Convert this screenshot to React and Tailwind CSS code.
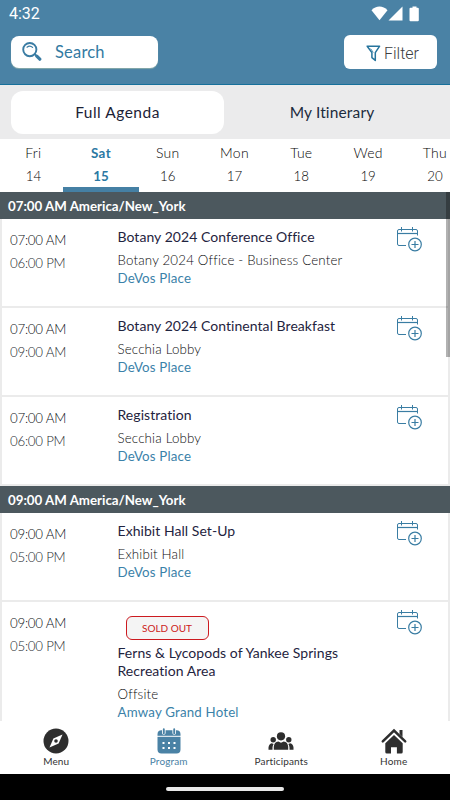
const days = [
  { name: "Fri", date: "14" },
  { name: "Sat", date: "15", active: true },
  { name: "Sun", date: "16" },
  { name: "Mon", date: "17" },
  { name: "Tue", date: "18" },
  { name: "Wed", date: "19" },
  { name: "Thu", date: "20" },
];

const sections = [
  {
    time: "07:00 AM America/New_York",
    items: [
      {
        start: "07:00 AM",
        end: "06:00 PM",
        title: "Botany 2024 Conference Office",
        room: "Botany 2024 Office - Business Center",
        place: "DeVos Place",
        height: "h-[89px]",
      },
      {
        start: "07:00 AM",
        end: "09:00 AM",
        title: "Botany 2024 Continental Breakfast",
        room: "Secchia Lobby",
        place: "DeVos Place",
        height: "h-[89px]",
      },
      {
        start: "07:00 AM",
        end: "06:00 PM",
        title: "Registration",
        room: "Secchia Lobby",
        place: "DeVos Place",
        height: "h-[89px]",
      },
    ],
  },
  {
    time: "09:00 AM America/New_York",
    items: [
      {
        start: "09:00 AM",
        end: "05:00 PM",
        title: "Exhibit Hall Set-Up",
        room: "Exhibit Hall",
        place: "DeVos Place",
        height: "h-[89px]",
      },
      {
        start: "09:00 AM",
        end: "05:00 PM",
        title: "Ferns & Lycopods of Yankee Springs Recreation Area",
        room: "Offsite",
        place: "Amway Grand Hotel",
        soldOut: true,
        height: "h-[123px]",
      },
    ],
  },
];

function SearchIcon() {
  return (
    <svg width="20" height="20" viewBox="0 0 20 20" fill="none" stroke="#3a7ca3" strokeLinecap="round">
      <circle cx="7.8" cy="7.6" r="6.6" strokeWidth="1.9" />
      <path d="M5 5.2a4.2 4.2 0 0 1 5.6.2" strokeWidth="1.2" />
      <path d="M13 12.4l1.6 1.5" strokeWidth="1.8" />
      <path d="M14.8 14.2l3 3" strokeWidth="3.2" />
    </svg>
  );
}

function FilterIcon() {
  return (
    <svg width="15" height="17" viewBox="0 0 15 17" fill="none" stroke="#26749d" strokeWidth="1.5" strokeLinejoin="round">
      <path d="M1.2 1.2h12.4L9.3 7.6v7.8L5.9 12.6V7.6z" />
      <path d="M4.6 3.6l2.7 3.9" strokeWidth="0.8" />
    </svg>
  );
}

function CalendarAdd() {
  return (
    <svg width="25" height="25" viewBox="0 0 25 25" fill="none" stroke="#3a7da3" strokeWidth="1">
      <path d="M9 18.500H2A1.500 1.500 0 0 1 .5 17V4A1.500 1.500 0 0 1 2 2.500h17A1.500 1.500 0 0 1 20.500 4v4.500" />
      <path d="M.5 6.500h20" strokeWidth="1.200" />
      <path d="M4.500 0v4.500M15.500 0v4.500" />
      <circle cx="18" cy="17.500" r="6.300" strokeWidth="1.200" />
      <path d="M14.500 17.500h7M18 14v7" strokeWidth="1.200" />
    </svg>
  );
}

function StatusBar() {
  return (
    <div className="flex h-7 items-center justify-between pr-[30px] pl-[9px]">
      <span className="font-[Roboto] text-[16px] leading-7 text-white">4:32</span>
      <svg width="49" height="16" viewBox="0 0 49 16" fill="#fff">
        <path d="M0.500 4.300C5-.7 12-.7 16.500 4.300L8.500 14.200z" />
        <path d="M31.500 0.500v14H17.500z" />
        <path d="M39.500 1.800h2V.5h4v1.300h1.300q1 0 1 1v11.400q0 1-1 1h-7.300q-1 0-1-1V2.800q0-1 1-1z" />
      </svg>
    </div>
  );
}

function AgendaItem({ item }) {
  return (
    <div className={`flex shrink-0 border-x-2 border-b-2 border-[#ebebeb] bg-white pl-2 ${item.height}`}>
      <div className="w-[107.5px] shrink-0 pt-[10px] text-[13.3px] font-light leading-[22.5px] tracking-[-0.25px] text-[#0c1015]">
        <p>{item.start}</p>
        <p className="text-[#262b30]">{item.end}</p>
      </div>
      <div className="w-[260.5px] shrink-0 pt-[9px] leading-[18px]">
        {item.soldOut && (
          <div className="mt-[5px] mb-1 ml-2 flex h-6 w-[83px] items-center justify-center rounded-md border border-[#cc1a20] bg-[#f4f4f4] text-[10px] text-[#cc1a20]">
            SOLD OUT
          </div>
        )}
        <p className="text-[14px] tracking-[0.05px] text-[#1f2440]">{item.title}</p>
        <p className="mt-[5px] text-[13.3px] font-light tracking-[0.18px] text-[#0c0c0e]">{item.room}</p>
        <p className="text-[13.3px] tracking-[0.18px] text-[#3b82a9]">{item.place}</p>
      </div>
      <div className="ml-[19px] pt-2">
        <CalendarAdd />
      </div>
    </div>
  );
}

function MenuIcon() {
  return (
    <svg width="26" height="26" viewBox="0 0 26 26">
      <circle cx="13" cy="13" r="12.500" fill="#2e2e2e" />
      <path d="M19.500 6.500L15.600 15.400 6.500 19.500 10.400 10.600z" fill="#fff" />
      <circle cx="13" cy="13" r="1.800" fill="#2e2e2e" />
    </svg>
  );
}

function ProgramIcon() {
  return (
    <svg width="26" height="26" viewBox="0 0 26 26">
      <path d="M5.500 2.300h15a4 4 0 0 1 4 4V21.500a4 4 0 0 1-4 4h-15a4 4 0 0 1-4-4V6.300a4 4 0 0 1 4-4z" fill="#4a82a5" />
      <path d="M1 8.300h24" stroke="#fff" strokeWidth="1" />
      <path d="M7.800 1v4M18.200 1v4" stroke="#fff" strokeWidth="3.600" strokeLinecap="round" />
      <path d="M7.800 1.200v4M18.200 1.200v4" stroke="#4a82a5" strokeWidth="1.900" strokeLinecap="round" />
      <path d="M6.500 15h2M12 15h2M17.500 15h2M6.500 20h2M12 20h2M17.500 20h2" stroke="#fff" strokeWidth="2" />
    </svg>
  );
}

function ParticipantsIcon() {
  return (
    <svg width="26" height="26" viewBox="0 0 26 26" fill="#2e2e2e">
      <circle cx="13" cy="8.300" r="4.100" />
      <circle cx="5.200" cy="11.700" r="2.700" />
      <circle cx="20.800" cy="11.700" r="2.700" />
      <path d="M5.800 21.800v-3q.3-4.800 4.500-5.300l2.700 1.300 2.700-1.300q4.200.5 4.500 5.300v3z" />
      <path d="M.5 21.800v-2.300q.3-3.500 3.300-4.200l1.800.6q-1 1.500-1.100 3.600v2.300zM25.500 21.800v-2.300q-.3-3.500-3.300-4.200l-1.800.6q1 1.500 1.100 3.600v2.300z" />
    </svg>
  );
}

function HomeIcon() {
  return (
    <svg width="26" height="26" viewBox="0 0 26 26" fill="#2e2e2e">
      <path d="M18.500 2h3v7l-3-3z" />
      <path d="M1.800 13.300L13 2.500l11.200 10.800" fill="none" stroke="#2e2e2e" strokeWidth="2.500" strokeLinecap="round" />
      <path d="M4.300 15.200L13 7l8.700 8.200V24q0 1.500-1.500 1.500h-4.300v-6.300H10v6.300H5.800q-1.500 0-1.500-1.500z" />
    </svg>
  );
}

const tabs = [
  { label: "Menu", icon: <MenuIcon /> },
  { label: "Program", icon: <ProgramIcon />, active: true },
  { label: "Participants", icon: <ParticipantsIcon /> },
  { label: "Home", icon: <HomeIcon /> },
];

export default function App() {
  return (
    <div className="flex h-[800px] w-[450px] flex-col overflow-hidden bg-white font-[Lato,sans-serif] [font-variant-ligatures:none]">
      <header className="h-[85px] shrink-0 border-b border-[#16709b] bg-[#4a82a5]">
        <StatusBar />
        <div className="flex items-start justify-between pr-[13px] pl-[11px] pt-[7px]">
          <div className="mt-px flex h-8 w-[147px] items-center rounded-lg bg-white pl-[11px] shadow-[0_1px_1px_#8aa]">
            <SearchIcon />
            <span className="ml-[13px] text-[16.5px] tracking-[0.2px] text-[#337aa2]">Search</span>
          </div>
          <div className="flex h-[34px] w-[93px] items-center rounded-md bg-white pl-[22px]">
            <div className="pt-[3px]">
              <FilterIcon />
            </div>
            <span className="ml-[3px] pt-[3px] font-[Roboto] text-[16px] font-light text-[#3c3e41]">Filter</span>
          </div>
        </div>
      </header>

      <div className="flex h-[54px] shrink-0 items-start bg-[#ebebec] pt-[6px] pl-[11px]">
        <div className="flex h-[43px] w-[213px] items-center justify-center rounded-xl bg-white pt-px text-[15.5px] tracking-[0.5px] text-[#1c2236]">Full Agenda</div>
        <div className="flex h-[43px] w-[216px] items-center justify-center pt-px text-[15.5px] tracking-[0.15px] text-[#1c2b3d]">My Itinerary</div>
      </div>

      <div className="h-[53px] shrink-0 overflow-hidden">
        <div className="flex w-[480px]">
          {days.map((d) => (
            <div
              key={d.name}
              className={
                d.active
                  ? "-mr-[4.7px] -ml-[3.8px] flex h-[53px] w-[76px] shrink-0 flex-col items-center border-b-[5px] border-[#4580a4] pt-[3px] text-[13.3px] leading-[22.5px] font-bold tracking-[0.4px] text-[#2b78a3]"
                  : "flex h-[53px] w-[66.8px] shrink-0 flex-col items-center pt-[3px] text-[14px] leading-[22.5px] font-light tracking-[0.3px] text-[#050505]"
              }
            >
              <span>{d.name}</span>
              <span className="text-[13.3px] tracking-normal">{d.date}</span>
            </div>
          ))}
        </div>
      </div>

      <div className="relative flex h-[529px] shrink-0 flex-col overflow-hidden">
        {sections.map((s) => (
          <section key={s.time} className="shrink-0">
            <h2 className="flex h-[27px] items-center bg-[#4c585e] pt-[2px] pl-2 text-[13.3px] font-bold text-white">{s.time}</h2>
            {s.items.map((item) => (
              <AgendaItem key={item.title} item={item} />
            ))}
          </section>
        ))}
        <div className="absolute top-0 right-0 h-[165px] w-1 bg-black/30" />
      </div>

      <nav className="flex h-[53px] shrink-0 bg-white">
        {tabs.map((t) => (
          <div key={t.label} className={t.active ? "flex flex-1 flex-col items-center pt-[7px] text-[#4a82a5]" : "flex flex-1 flex-col items-center pt-[7px] text-[#333]"}>
            {t.icon}
            <span className="text-[10px] leading-[14px] tracking-[0.15px]">{t.label}</span>
          </div>
        ))}
      </nav>

      <div className="flex flex-1 items-center justify-center bg-black pt-1">
        <div className="h-1 w-[118px] rounded-full bg-[#e8e8e8]" />
      </div>
    </div>
  );
}
